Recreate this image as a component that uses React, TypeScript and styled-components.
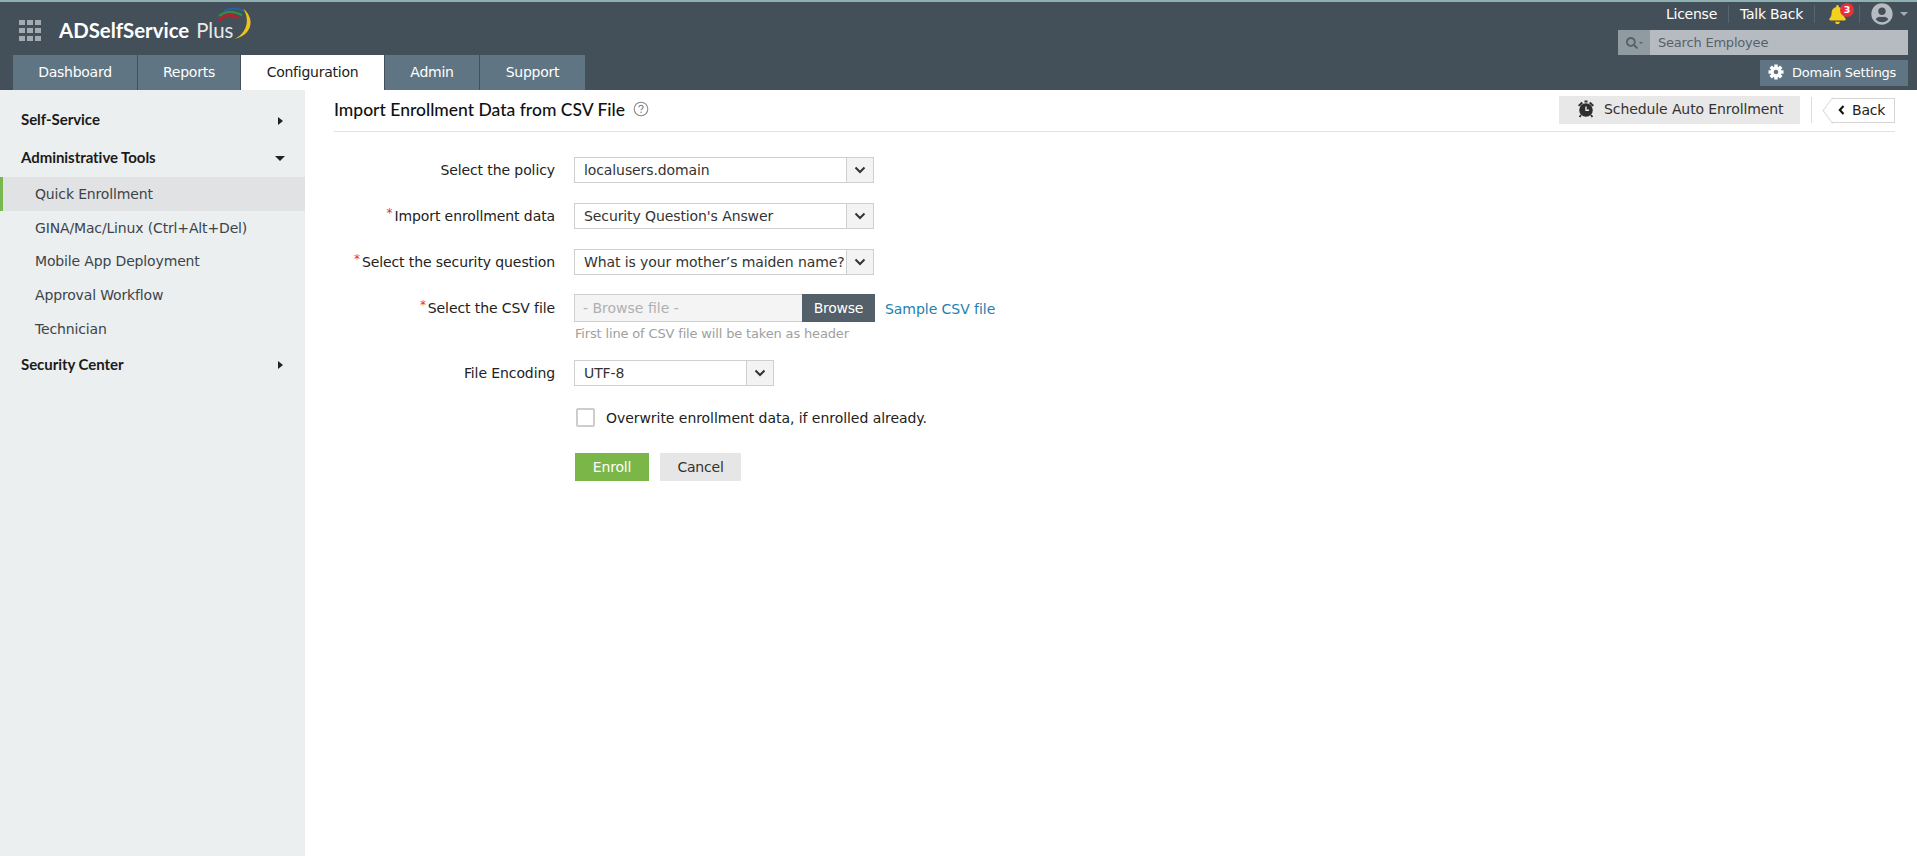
import React from "react";
import styled, { createGlobalStyle } from "styled-components";
import { FaBell, FaSearch, FaUserCircle } from "react-icons/fa";

const Global = createGlobalStyle`
  html, body { margin: 0; padding: 0; background: #fff; }
  body { font-family: "DejaVu Sans", "Liberation Sans", sans-serif; font-size: 14px; color: #222; }
  * { box-sizing: border-box; }
`;

const Page = styled.div`
  width: 1917px;
  height: 856px;
  display: flex;
  flex-direction: column;
  overflow: hidden;
`;

const Header = styled.header`
  height: 90px;
  flex: none;
  display: flex;
  justify-content: space-between;
  background: #434f59;
  border-top: 2px solid #8fb0b0;
  padding: 0 9px 0 13px;
`;

const HeaderLeft = styled.div`
  display: flex;
  flex-direction: column;
  justify-content: space-between;
`;

const Brand = styled.div`
  display: flex;
  align-items: center;
  height: 44px;
  padding: 12px 0 0 6px;
  gap: 18px;
`;

const Apps = styled.div`
  display: grid;
  grid-template-columns: repeat(3, 6px);
  grid-auto-rows: 5px;
  gap: 3px 2px;
  span { background: #a3abb1; }
`;

const LogoText = styled.div`
  position: relative;
  font-family: Lato, "Open Sans", sans-serif;
  font-size: 20.4px;
  font-weight: 700;
  color: #fff;
  white-space: nowrap;
  em { font-style: normal; font-weight: 400; color: #e6e9eb; margin-left: 2px; }
  svg { position: absolute; left: 155px; top: -12px; }
`;

const Tabs = styled.nav`
  display: flex;
  gap: 1px;
`;

const Tab = styled.div<{ $w: number; $active?: boolean }>`
  width: ${(p) => p.$w}px;
  height: 35px;
  display: flex;
  align-items: center;
  justify-content: center;
  font-size: 14px;
  letter-spacing: -0.25px;
  padding-bottom: 2px;
  background: ${(p) => (p.$active ? "#fff" : "#5f7584")};
  color: ${(p) => (p.$active ? "#222" : "#fff")};
`;

const HeaderRight = styled.div`
  width: 290px;
  display: flex;
  flex-direction: column;
  align-items: flex-end;
`;

const TopLinks = styled.div`
  height: 24px;
  margin-bottom: 4px;
  display: flex;
  align-items: center;
  color: #fff;
  font-size: 14px;
  letter-spacing: -0.25px;
  span.sep { width: 1px; height: 18px; background: #566570; margin: 0 11px; }
`;

const Bell = styled.div`
  position: relative;
  width: 22px;
  height: 22px;
  color: #f2d21e;
  display: flex;
  align-items: center;
  justify-content: center;
  font-size: 19px;
`;

const Badge = styled.b`
  position: absolute;
  top: 0px;
  right: -6px;
  width: 14px;
  height: 14px;
  border-radius: 50%;
  background: #e8303a;
  color: #fff;
  font-size: 9.5px;
  font-weight: 700;
  line-height: 14px;
  text-align: center;
  letter-spacing: 0;
`;

const Avatar = styled.div`
  display: flex;
  align-items: center;
  gap: 7px;
  color: #b5bbc0;
  font-size: 22px;
  i { width: 0; height: 0; border: 4px solid transparent; border-top-color: #a5adb3; border-bottom: 0; }
`;

const Search = styled.div`
  width: 290px;
  height: 25px;
  display: flex;
  background: #b5bbc0;
`;

const SearchIcon = styled.div`
  width: 32px;
  background: #8f9aa1;
  color: #55626c;
  display: flex;
  align-items: center;
  justify-content: center;
  gap: 1px;
  font-size: 12px;
  i { width: 0; height: 0; border: 2px solid transparent; border-top-color: #55626c; border-bottom: 0; }
`;

const SearchText = styled.div`
  padding-left: 8px;
  line-height: 25px;
  font-size: 13px;
  letter-spacing: -0.2px;
  color: #56626b;
`;

const DomainButton = styled.div`
  margin-top: 5px;
  width: 148px;
  height: 26px;
  background: #5f7584;
  color: #fff;
  font-size: 13px;
  letter-spacing: -0.25px;
  display: flex;
  align-items: center;
  gap: 8px;
  padding: 0 0 2px 8px;
`;

const Body = styled.div`
  flex: 1;
  display: flex;
  min-height: 0;
`;

const Sidebar = styled.aside`
  width: 305px;
  flex: none;
  background: #ebeff0;
  padding-top: 11px;
`;

const Section = styled.div`
  height: 38px;
  padding: 0 21px 2px;
  display: flex;
  align-items: center;
  justify-content: space-between;
  font-family: Lato, "Open Sans", sans-serif;
  font-size: 15px;
  font-weight: 700;
  letter-spacing: -0.05px;
  color: #1b1b1b;
`;

const CaretRight = styled.i`
  width: 0;
  height: 0;
  margin-right: 1px;
  margin-top: 3px;
  border-style: solid;
  border-width: 4.5px 0 4.5px 5px;
  border-color: transparent transparent transparent #222;
`;

const CaretDown = styled.i`
  width: 0;
  height: 0;
  margin-right: -1px;
  margin-top: 2px;
  border-style: solid;
  border-width: 5px 5px 0;
  border-color: #222 transparent transparent;
`;

const Item = styled.div<{ $active?: boolean }>`
  height: 33.75px;
  display: flex;
  align-items: center;
  padding-left: ${(p) => (p.$active ? 32 : 35)}px;
  font-size: 14px;
  letter-spacing: -0.15px;
  color: #3d4449;
  background: ${(p) => (p.$active ? "#e1e2e3" : "transparent")};
  border-left: ${(p) => (p.$active ? "3px solid #78b94d" : "0")};
`;

const Main = styled.main`
  flex: 1;
  padding: 6px 22px 0 29px;
`;

const TitleBar = styled.div`
  height: 36px;
  display: flex;
  align-items: center;
  justify-content: space-between;
  border-bottom: 1px solid #e2e2e2;
  padding-bottom: 7px;
`;

const Title = styled.h1`
  margin: 0;
  display: flex;
  align-items: center;
  gap: 8px;
  font-family: Lato, "Open Sans", sans-serif;
  font-size: 17.5px;
  font-weight: 500;
  color: #111;
  position: relative;
  top: -1px;
`;

const TitleActions = styled.div`
  display: flex;
  align-items: center;
`;

const ScheduleButton = styled.div`
  width: 241px;
  height: 28px;
  background: #e8e8e8;
  color: #333;
  display: flex;
  align-items: center;
  gap: 9px;
  padding: 0 0 2px 18px;
  font-size: 14px;
  letter-spacing: -0.1px;
`;

const VSep = styled.span`
  width: 1px;
  height: 26px;
  background: #ddd;
  margin: 0 20px 0 11px;
`;

const BackButton = styled.div`
  position: relative;
  width: 63px;
  height: 25px;
  border: 1px solid #d5d5d5;
  border-left: 0;
  display: flex;
  align-items: center;
  gap: 7px;
  padding-left: 6px;
  font-size: 14px;
  letter-spacing: -0.2px;
  color: #222;
  &::before {
    content: "";
    position: absolute;
    left: -9px;
    top: 2.6px;
    width: 17.7px;
    height: 17.7px;
    transform: scaleX(0.72) rotate(45deg);
    border-left: 1px solid #d5d5d5;
    border-bottom: 1px solid #d5d5d5;
  }
`;

const Form = styled.form`
  margin-top: 25px;
  display: grid;
  grid-template-columns: 221px 1fr;
  column-gap: 19px;
  align-items: start;
`;

const Label = styled.div<{ $h?: number }>`
  height: ${(p) => p.$h ?? 26}px;
  display: flex;
  align-items: center;
  justify-content: flex-end;
  font-size: 14px;
  letter-spacing: -0.1px;
  color: #222;
  white-space: nowrap;
`;

const Star = styled.sup`
  color: #e8303a;
  font-size: 12px;
  line-height: 1;
  margin: -7px 2px 0 0;
  vertical-align: baseline;
`;

const Field = styled.div<{ $mb: number }>`
  margin-bottom: ${(p) => p.$mb}px;
`;

const Select = styled.div<{ $w: number }>`
  width: ${(p) => p.$w}px;
  height: 26px;
  border: 1px solid #cfcfcf;
  display: flex;
  align-items: center;
  font-size: 14px;
  letter-spacing: -0.1px;
  color: #333;
`;

const SelectValue = styled.div`
  flex: 1;
  padding-left: 9px;
  white-space: nowrap;
  overflow: hidden;
`;

const SelectArrow = styled.div`
  width: 27px;
  height: 100%;
  background: #f3f3f3;
  border-left: 1px solid #cfcfcf;
  display: flex;
  align-items: center;
  justify-content: center;
  flex: none;
`;

const FileRow = styled.div`
  display: flex;
  align-items: center;
`;

const FileInput = styled.div`
  width: 228px;
  height: 28px;
  background: #f4f4f4;
  border: 1px solid #cfcfcf;
  border-right: 0;
  color: #b0b0b0;
  padding-left: 8px;
  line-height: 26px;
  font-size: 14px;
`;

const BrowseButton = styled.div`
  width: 73px;
  height: 28px;
  background: #535f69;
  color: #fff;
  text-align: center;
  line-height: 28px;
  font-size: 14px;
  letter-spacing: -0.25px;
`;

const SampleLink = styled.a`
  margin-left: 10px;
  color: #1e7fb0;
  font-size: 14px;
  letter-spacing: -0.05px;
  position: relative;
  top: 1px;
`;

const Hint = styled.div`
  margin-top: 4px;
  color: #a0a0a0;
  font-size: 13px;
  letter-spacing: -0.16px;
  line-height: 15px;
  margin-left: 1px;
`;

const CheckRow = styled.div`
  display: flex;
  align-items: center;
  gap: 11px;
  margin-left: 2px;
  height: 19px;
  font-size: 14px;
  letter-spacing: -0.05px;
`;

const CheckBox = styled.span`
  width: 19px;
  height: 19px;
  border: 2px solid #cdcdcd;
  background: #fff;
  border-radius: 2px;
`;

const Buttons = styled.div`
  display: flex;
  gap: 11px;
  margin-left: 1px;
`;

const EnrollButton = styled.div`
  width: 74px;
  height: 28px;
  background: #7ab648;
  color: #fff;
  line-height: 28px;
  text-align: center;
  letter-spacing: -0.2px;
`;

const CancelButton = styled.div`
  width: 81px;
  height: 28px;
  background: #e6e6e6;
  color: #333;
  line-height: 28px;
  text-align: center;
  letter-spacing: -0.2px;
`;

const Chevron = () => (
  <svg width="12" height="8" viewBox="0 0 12 8" fill="none">
    <path d="M1.5 1.5 6 6l4.5-4.5" stroke="#333" strokeWidth="2" />
  </svg>
);

const HelpIcon = () => (
  <svg width="16" height="16" viewBox="0 0 16 16" fill="none">
    <circle cx="8" cy="8" r="6.8" stroke="#888" strokeWidth="1.1" />
    <path d="M5.9 6.3c0-1.2 1-2 2.2-2s2.1.8 2.1 1.9c0 1.6-2.1 1.6-2.1 3.1" stroke="#888" strokeWidth="1.2" />
    <circle cx="8.1" cy="11.3" r=".8" fill="#888" />
  </svg>
);

const AlarmIcon = () => (
  <svg width="18" height="18" viewBox="0 0 18 18">
    <circle cx="9" cy="10" r="6.8" fill="#2e2e2e" />
    <path d="M1 5.2 4.6 1.8 6 3.2 2.4 6.6zM17 5.2l-3.6-3.4L12 3.2l3.6 3.4z" fill="#2e2e2e" />
    <rect x="7.5" y="0.5" width="3" height="2" fill="#2e2e2e" />
    <path d="M4 15 2.6 17M14 15l1.4 2" stroke="#2e2e2e" strokeWidth="1.8" />
    <path d="M9 6.4v3.8h3" stroke="#e8e8e8" strokeWidth="1.4" fill="none" />
  </svg>
);

const GearIcon = () => (
  <svg width="16" height="16" viewBox="0 0 16 16" fill="#fff">
    {[0, 45, 90, 135].map((a) => (
      <rect key={a} x="6.3" y="0.5" width="3.4" height="15" transform={`rotate(${a} 8 8)`} />
    ))}
    <circle cx="8" cy="8" r="5.6" />
    <circle cx="8" cy="8" r="2.3" fill="#5f7584" />
  </svg>
);

const BackChevron = () => (
  <svg width="7" height="10" viewBox="0 0 7 10" fill="none">
    <path d="M5.5 1 1.8 5l3.7 4" stroke="#111" strokeWidth="2.1" />
  </svg>
);

const LogoArc = () => (
  <svg width="40" height="34" viewBox="0 0 120 102" fill="none">
    <path d="M30 14Q60 0 90 15" stroke="#2a5fa8" strokeWidth="6" />
    <path d="M15 30Q45 6 85 28" stroke="#2f8f4a" strokeWidth="7" />
    <path d="M15 44Q40 15 72 36" stroke="#b4232c" strokeWidth="9" />
    <path d="M88 8C122 35 118 85 62 99 100 80 108 40 88 8Z" fill="#f0c31c" />
  </svg>
);

const tabs: [string, number][] = [
  ["Dashboard", 124],
  ["Reports", 102],
  ["Configuration", 143],
  ["Admin", 94],
  ["Support", 105],
];

export default function App() {
  return (
    <Page>
      <Global />
      <Header>
        <HeaderLeft>
          <Brand>
            <Apps>
              {Array.from({ length: 9 }).map((_, i) => (
                <span key={i} />
              ))}
            </Apps>
            <LogoText>
              ADSelfService <em>Plus</em>
              <LogoArc />
            </LogoText>
          </Brand>
          <Tabs>
            {tabs.map(([t, w]) => (
              <Tab key={t} $w={w} $active={t === "Configuration"}>
                {t}
              </Tab>
            ))}
          </Tabs>
        </HeaderLeft>
        <HeaderRight>
          <TopLinks>
            License
            <span className="sep" />
            Talk Back
            <span className="sep" />
            <Bell>
              <FaBell />
              <Badge>3</Badge>
            </Bell>
            <span className="sep" />
            <Avatar>
              <FaUserCircle />
              <i />
            </Avatar>
          </TopLinks>
          <Search>
            <SearchIcon>
              <FaSearch />
              <i />
            </SearchIcon>
            <SearchText>Search Employee</SearchText>
          </Search>
          <DomainButton>
            <GearIcon />
            Domain Settings
          </DomainButton>
        </HeaderRight>
      </Header>
      <Body>
        <Sidebar>
          <Section>
            Self-Service
            <CaretRight />
          </Section>
          <Section>
            Administrative Tools
            <CaretDown />
          </Section>
          <Item $active>Quick Enrollment</Item>
          <Item>GINA/Mac/Linux (Ctrl+Alt+Del)</Item>
          <Item>Mobile App Deployment</Item>
          <Item>Approval Workflow</Item>
          <Item>Technician</Item>
          <Section>
            Security Center
            <CaretRight />
          </Section>
        </Sidebar>
        <Main>
          <TitleBar>
            <Title>
              Import Enrollment Data from CSV File
              <HelpIcon />
            </Title>
            <TitleActions>
              <ScheduleButton>
                <AlarmIcon />
                Schedule Auto Enrollment
              </ScheduleButton>
              <VSep />
              <BackButton>
                <BackChevron />
                Back
              </BackButton>
            </TitleActions>
          </TitleBar>
          <Form>
            <Label>Select the policy</Label>
            <Field $mb={20}>
              <Select $w={300}>
                <SelectValue>localusers.domain</SelectValue>
                <SelectArrow>
                  <Chevron />
                </SelectArrow>
              </Select>
            </Field>
            <Label>
              <Star>*</Star>Import enrollment data
            </Label>
            <Field $mb={20}>
              <Select $w={300}>
                <SelectValue>Security Question's Answer</SelectValue>
                <SelectArrow>
                  <Chevron />
                </SelectArrow>
              </Select>
            </Field>
            <Label>
              <Star>*</Star>Select the security question
            </Label>
            <Field $mb={19}>
              <Select $w={300}>
                <SelectValue>What is your mother’s maiden name?</SelectValue>
                <SelectArrow>
                  <Chevron />
                </SelectArrow>
              </Select>
            </Field>
            <Label $h={28}>
              <Star>*</Star>Select the CSV file
            </Label>
            <Field $mb={19}>
              <FileRow>
                <FileInput>- Browse file -</FileInput>
                <BrowseButton>Browse</BrowseButton>
                <SampleLink>Sample CSV file</SampleLink>
              </FileRow>
              <Hint>First line of CSV file will be taken as header</Hint>
            </Field>
            <Label>File Encoding</Label>
            <Field $mb={22}>
              <Select $w={200}>
                <SelectValue>UTF-8</SelectValue>
                <SelectArrow>
                  <Chevron />
                </SelectArrow>
              </Select>
            </Field>
            <span />
            <Field $mb={26}>
              <CheckRow>
                <CheckBox />
                Overwrite enrollment data, if enrolled already.
              </CheckRow>
            </Field>
            <span />
            <Buttons>
              <EnrollButton>Enroll</EnrollButton>
              <CancelButton>Cancel</CancelButton>
            </Buttons>
          </Form>
        </Main>
      </Body>
    </Page>
  );
}
